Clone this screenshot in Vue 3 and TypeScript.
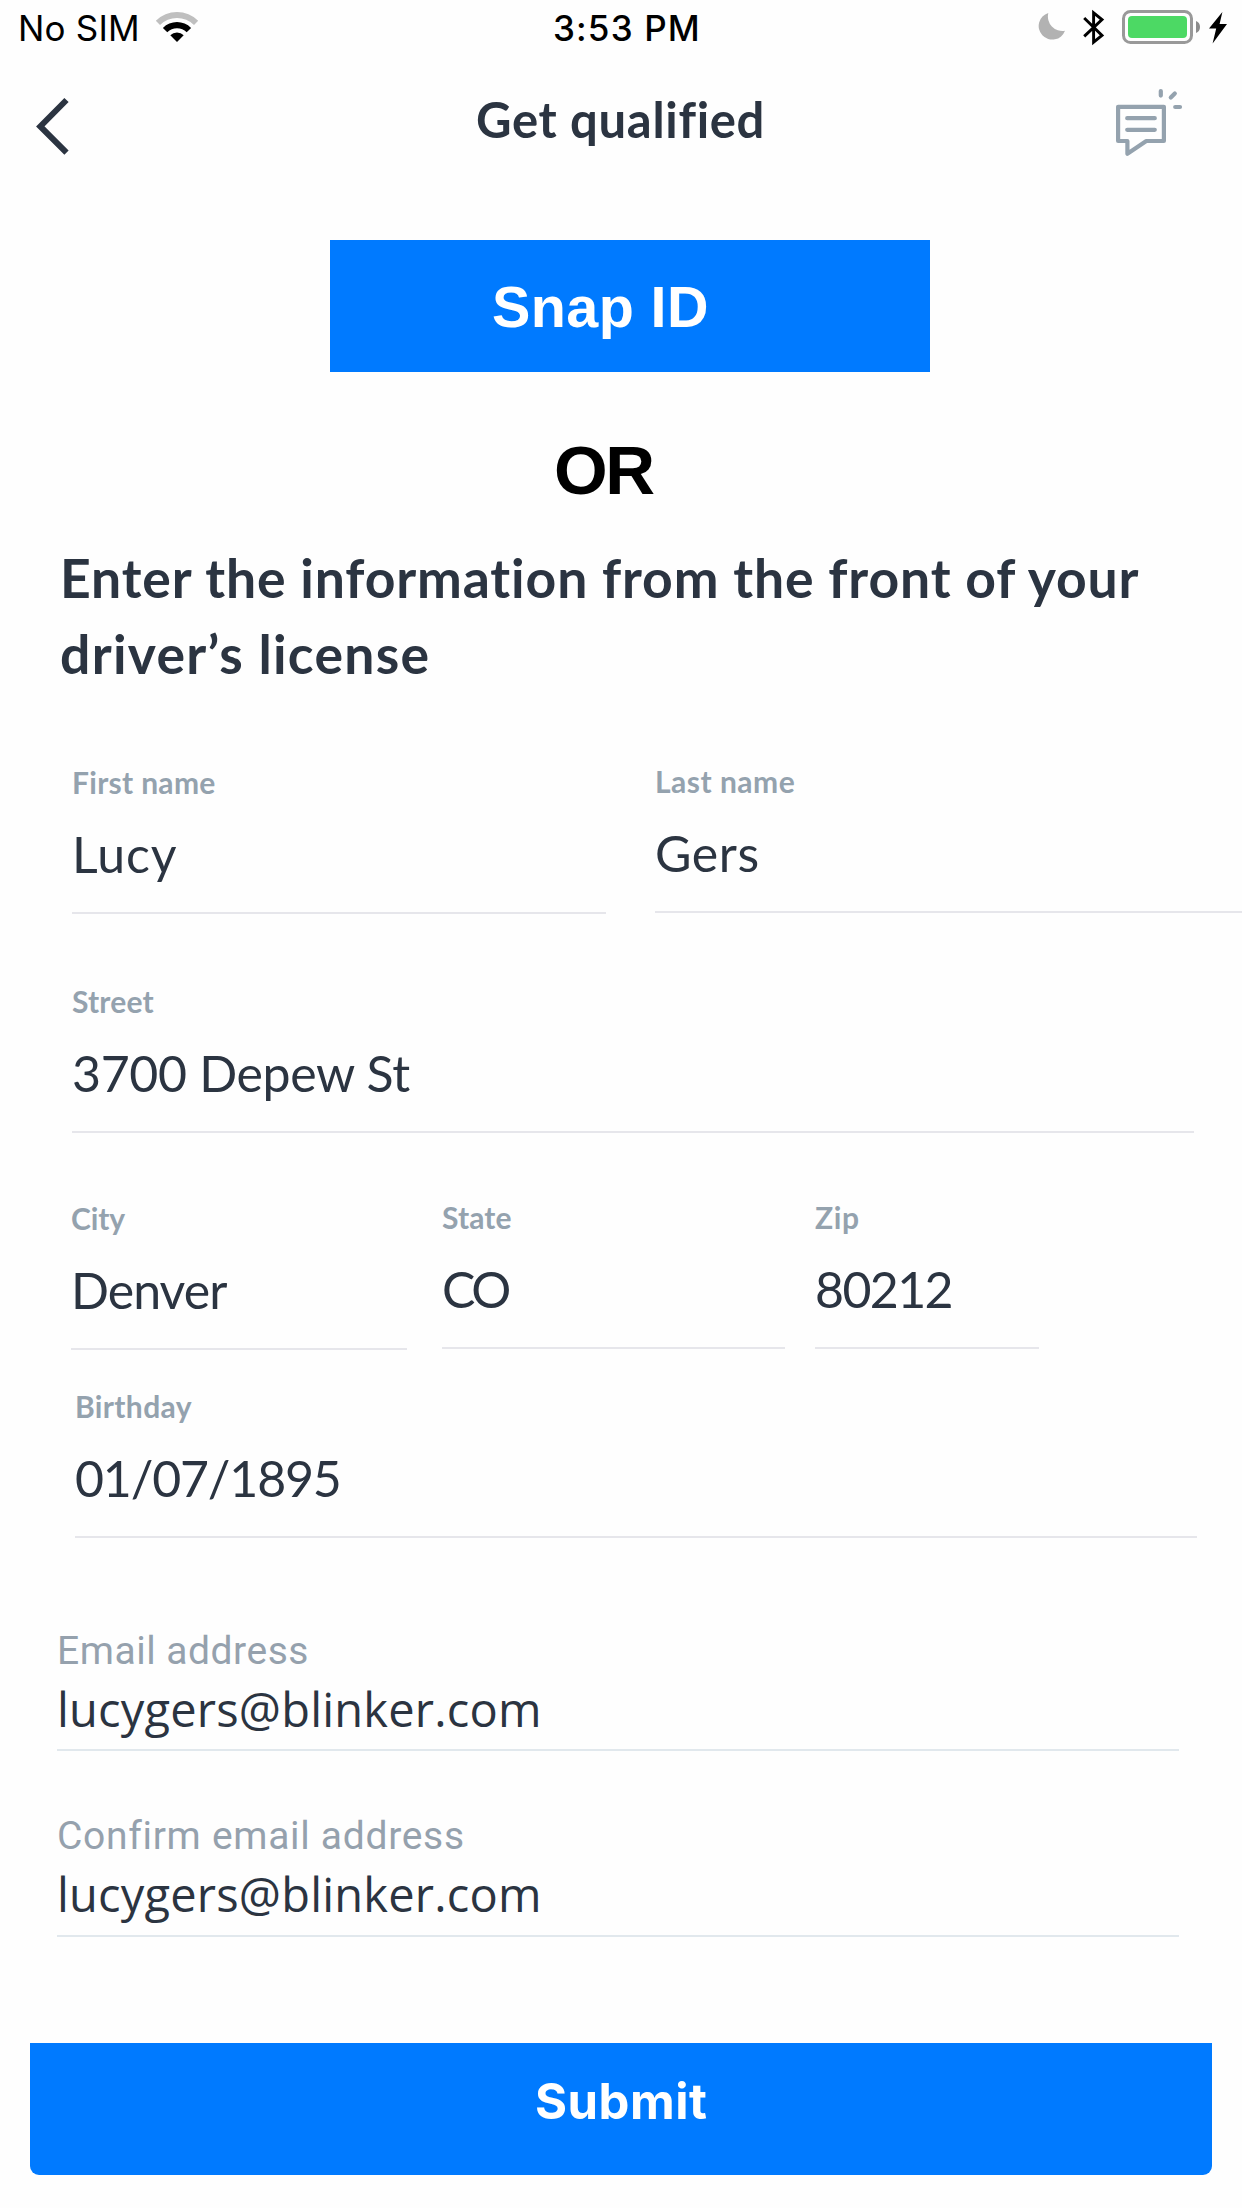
<script setup lang="ts">
interface Field {
  id: string
  label: string
  value: string
  labelTracking: number
  valueTracking: number
}

const nameRow: Field[] = [
  { id: 'first', label: 'First name', value: 'Lucy', labelTracking: 0.3, valueTracking: 0.9 },
  { id: 'last', label: 'Last name', value: 'Gers', labelTracking: 0.5, valueTracking: 0.6 },
]
const streetRow: Field[] = [
  { id: 'street', label: 'Street', value: '3700 Depew St', labelTracking: 0.2, valueTracking: -0.33 },
]
const cityRow: Field[] = [
  { id: 'city', label: 'City', value: 'Denver', labelTracking: -0.1, valueTracking: -0.95 },
  { id: 'state', label: 'State', value: 'CO', labelTracking: 0.1, valueTracking: -3.5 },
  { id: 'zip', label: 'Zip', value: '80212', labelTracking: 0.6, valueTracking: -1.6 },
]
const birthdayRow: Field[] = [
  { id: 'birthday', label: 'Birthday', value: '01/07/1895', labelTracking: 0.35, valueTracking: -1.15 },
]
const rows = [
  { id: 'name', fields: nameRow },
  { id: 'address', fields: streetRow },
  { id: 'locality', fields: cityRow },
  { id: 'birth', fields: birthdayRow },
]
const emails = [
  { id: 'email', label: 'Email address', value: 'lucygers@blinker.com', labelTracking: 0.52 },
  { id: 'confirm', label: 'Confirm email address', value: 'lucygers@blinker.com', labelTracking: 0.7 },
]
</script>

<template>
  <main class="screen">
    <div class="status">
      <div class="carrier">
        <span>No SIM</span>
        <svg class="wifi" width="44" height="32" viewBox="0 0 44 32">
          <path d="M.8 9.8A30 30 0 0 1 43.2 9.8L39 14A24 24 0 0 0 5 14Z" fill="#bfbfbf" />
          <path d="M7.9 16.9A20 20 0 0 1 36.1 16.9L31.7 21.3A13.7 13.7 0 0 0 12.3 21.3Z" />
          <path d="M15.3 24.3A9.5 9.5 0 0 1 28.7 24.3L22 31Z" />
        </svg>
      </div>
      <span class="time">3:53 PM</span>
      <svg class="indicators" width="204" height="48" viewBox="1036 0 204 48">
        <path d="M1048.3 13A13.6 13.6 0 1 0 1065 30.8A14.6 14.6 0 0 1 1048.3 13Z" fill="#b2b2b2" />
        <path d="M1084.2 18L1102 35.4L1093.6 42.2V12.8L1102 19.6L1084.2 36.4" fill="none" stroke="#000" stroke-width="2.9" />
        <rect x="1123.5" y="11.5" width="68" height="31" rx="7" fill="none" stroke="#999" stroke-width="3" />
        <rect x="1128" y="16" width="59" height="22" rx="4" fill="#4cd964" />
        <path d="M1196 21Q1200 22.5 1200 27T1196 33Z" fill="#8c8c8c" />
        <path d="M1222.4 12L1209 28.6H1216.2L1212.6 43.6L1227 24H1219.6Z" />
      </svg>
    </div>

    <header class="header">
      <svg class="back" width="36" height="60" viewBox="0 0 36 60" fill="none">
        <path d="M31.5 4L5.3 30.4L31.5 56.6" stroke="#2b3441" stroke-width="6" />
      </svg>
      <h1>Get qualified</h1>
      <svg class="chat" width="70" height="72" viewBox="1114 86 70 72" fill="none" stroke="#94a2ae" stroke-width="4.2" stroke-linecap="round" stroke-linejoin="round">
        <path d="M1118.1 106.8H1163.9V141H1146.3L1127.4 153.8V141H1118.1Z" />
        <path d="M1127.2 118.2H1154.8M1127.2 129.8H1154.8" />
        <path d="M1160.8 91V95.6M1170.8 97.4L1174.8 93.4M1175.2 107H1180" />
      </svg>
    </header>

    <button class="snap">Snap ID</button>
    <p class="or">OR</p>
    <h2>Enter the information from the front of your<br><span class="second">driver’s license</span></h2>

    <section v-for="row in rows" :key="row.id" class="row" :class="row.id">
      <div v-for="f in row.fields" :key="f.id" class="field" :class="f.id">
        <div class="label" :style="{ letterSpacing: f.labelTracking + 'px' }">{{ f.label }}</div>
        <div class="value" :style="{ letterSpacing: f.valueTracking + 'px' }">{{ f.value }}</div>
      </div>
    </section>

    <section class="emails">
      <div v-for="e in emails" :key="e.id" class="mail" :class="e.id">
        <div class="mail-label" :style="{ letterSpacing: e.labelTracking + 'px' }">{{ e.label }}</div>
        <div class="mail-value">{{ e.value }}</div>
      </div>
    </section>

    <button class="submit">Submit</button>
  </main>
</template>

<style>
body {
  background: #fefefe;
}
</style>

<style scoped>
.screen {
  width: 1242px;
  height: 2208px;
  overflow: hidden;
  background: #fefefe;
  color: #2b3441;
  font-family: Lato, sans-serif;
  font-variant-ligatures: none;
  display: flex;
  flex-direction: column;
  align-items: flex-start;
}
h1, h2, p { margin: 0; }
button { border: 0; padding: 0; color: #fff; background: #007aff; text-align: left; display: block; }
svg { display: block; flex: none; }

.status {
  display: flex;
  width: 1242px;
  height: 49px;
  color: #000;
  font: 400 35px/42px Inter, sans-serif;
}
.carrier { display: flex; width: 553px; padding: 7px 0 0 18px; box-sizing: border-box; letter-spacing: .2px; }
.wifi { margin: 4px 0 0 15px; }
.time { padding-top: 7px; font-weight: 500; letter-spacing: 1.15px; }
.indicators { margin-left: auto; margin-right: 2px; }

.header {
  display: flex;
  width: 1242px;
  height: 191px;
  padding: 0 58px 0 35px;
  box-sizing: border-box;
}
.back { margin-top: 47px; }
.header h1 { flex: 1; margin: 41px 0 0 405px; font-size: 49px; line-height: 58px; font-weight: 700; letter-spacing: .68px; }
.chat { margin-top: 37px; }

.snap {
  width: 600px;
  height: 132px;
  margin-left: 330px;
  padding: 35px 0 33px 162px;
  font: 700 57.5px/64px "Liberation Sans", sans-serif;
  letter-spacing: .4px;
}
.or {
  margin: 61px 0 0 554px;
  color: #000;
  font: 700 69px/76px "Liberation Sans", sans-serif;
  letter-spacing: -2.4px;
}
h2 {
  margin: 30px 0 72px 60px;
  font-size: 53.5px;
  line-height: 76px;
  font-weight: 700;
  letter-spacing: .86px;
  white-space: nowrap;
}
.second { letter-spacing: 1.28px; }

.row { display: flex; align-items: flex-start; width: 1242px; }
.field { box-sizing: border-box; border-bottom: 2px solid #e6e6eb; padding-bottom: 28px; }
.label { color: #94a2ae; font-size: 30px; line-height: 36px; font-weight: 700; }
.value { margin-top: 24px; font-size: 50px; line-height: 60px; white-space: nowrap; }
.first { width: 534px; margin: 1px 49px 0 72px; }
.last { width: 587px; }
.street { width: 1122px; margin: 69px 0 0 72px; }
.locality { margin-top: 66px; }
.city { width: 336px; margin: 1px 35px 0 71px; }
.state { width: 343px; margin-right: 30px; }
.zip { width: 224px; }
.birthday { width: 1122px; margin: 38px 0 0 75px; }

.emails { width: 1122px; margin: 90px 0 0 57px; }
.mail { border-bottom: 2px solid #e1e8ed; padding-bottom: 8px; }
.confirm { margin-top: 62px; padding-bottom: 9px; }
.mail-label { color: #95a1ad; font: 400 39px/46px Roboto, sans-serif; }
.mail-value { margin-top: 3px; font: 400 47px/64px "Open Sans", sans-serif; letter-spacing: .2px; }

.submit {
  width: 1182px;
  height: 132px;
  margin: 106px 0 0 30px;
  padding: 29px 0 44px 505px;
  border-radius: 0 0 9px 9px;
  font: 700 49px/59px Inter, sans-serif;
  letter-spacing: .5px;
}
</style>
